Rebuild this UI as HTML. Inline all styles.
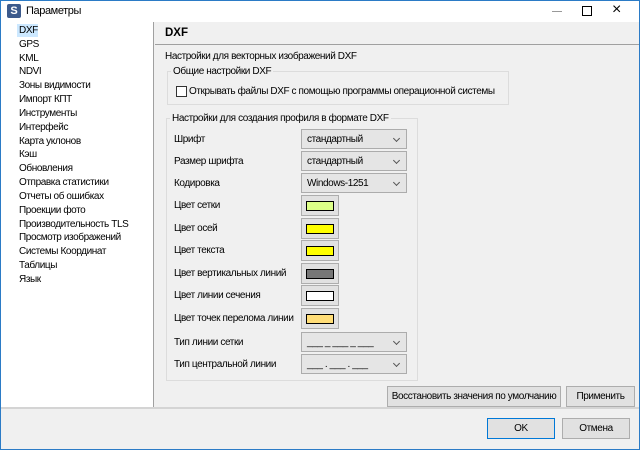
<!DOCTYPE html>
<html><head><meta charset="utf-8"><style>
*{box-sizing:border-box;margin:0;padding:0}
body{width:640px;height:450px;overflow:hidden;background:#f0f0f0;font-family:"Liberation Sans",sans-serif;font-size:10px;letter-spacing:-0.4px;color:#000;position:relative}
.a{position:absolute;white-space:nowrap}
.win{position:absolute;left:0;top:0;width:640px;height:450px;border:1px solid #2b7bc6;}
.combo{position:absolute;left:301px;width:106px;height:20px;background:#e5e5e5;border:1px solid #acacac;padding:4px 0 0 5px}
.combo:after{content:"";position:absolute;right:7px;top:6px;width:4px;height:4px;border-right:1px solid #555;border-bottom:1px solid #555;transform:rotate(45deg)}
.cb{position:absolute;left:301px;width:38px;height:21px;background:#e1e1e1;border:1px solid #adadad}
.cb i{position:absolute;left:4px;top:5px;width:28px;height:10px;border:1px solid #000}
.btn{position:absolute;height:21px;background:#e1e1e1;border:1px solid #adadad;text-align:center;padding-top:4px;white-space:nowrap}
.lbl{position:absolute;left:174px}
</style></head><body>
<div class="a" style="left:0;top:0;width:640px;height:22px;background:#fff"></div>
<div class="a" style="left:7px;top:4px;width:14px;height:14px;background:#3c5a8c;color:#fff;font-weight:bold;font-size:11px;text-align:center;line-height:14px;border-radius:2px;letter-spacing:0">S</div>
<div class="a" style="left:26px;top:5px;font-size:11px">Параметры</div>
<div class="a" style="left:552px;top:11px;width:10px;height:1px;background:#999"></div>
<div class="a" style="left:582px;top:6px;width:10px;height:10px;border:1px solid #000"></div>
<div class="a" style="left:612px;top:1px;font-size:16px;font-weight:300">×</div>

<div class="a" style="left:1px;top:22px;width:153px;height:386px;background:#fff;border-right:1px solid #a0a0a0"></div>
<div class="a" style="left:17px;top:24px;width:21px;height:13px;background:#cce8ff"></div>
<div class="a" style="left:19px;top:24px;line-height:13.83px">DXF<br>GPS<br>KML<br>NDVI<br>Зоны видимости<br>Импорт КПТ<br>Инструменты<br>Интерфейс<br>Карта уклонов<br>Кэш<br>Обновления<br>Отправка статистики<br>Отчеты об ошибках<br>Проекции фото<br>Производительность TLS<br>Просмотр изображений<br>Системы Координат<br>Таблицы<br>Язык</div>

<div class="a" style="left:155px;top:44px;width:484px;height:1px;background:#a0a0a0"></div>
<div class="a" style="left:165px;top:27px;font-weight:bold;font-size:11.5px;letter-spacing:0">DXF</div>
<div class="a" style="left:165px;top:51px">Настройки для векторных изображений DXF</div>

<div class="a" style="left:167px;top:71px;width:342px;height:34px;border:1px solid #dcdcdc"></div>
<div class="a" style="left:171px;top:66px;background:#f0f0f0;padding:0 2px">Общие настройки DXF</div>
<div class="a" style="left:176px;top:86px;width:11px;height:11px;border:1px solid #333;background:#fff"></div>
<div class="a" style="left:189px;top:86px">Открывать файлы DXF с помощью программы операционной системы</div>

<div class="a" style="left:166px;top:118px;width:252px;height:263px;border:1px solid #dcdcdc"></div>
<div class="a" style="left:170px;top:113px;background:#f0f0f0;padding:0 2px">Настройки для создания профиля в формате DXF</div>

<div class="lbl a" style="top:134px">Шрифт</div><div class="combo" style="top:129px">стандартный</div>
<div class="lbl a" style="top:156px">Размер шрифта</div><div class="combo" style="top:151px">стандартный</div>
<div class="lbl a" style="top:178px">Кодировка</div><div class="combo" style="top:173px">Windows-1251</div>
<div class="lbl a" style="top:200px">Цвет сетки</div><div class="cb" style="top:195px"><i style="background:#ddff88"></i></div>
<div class="lbl a" style="top:223px">Цвет осей</div><div class="cb" style="top:218px"><i style="background:#ffff00"></i></div>
<div class="lbl a" style="top:245px">Цвет текста</div><div class="cb" style="top:240px"><i style="background:#ffff00"></i></div>
<div class="lbl a" style="top:268px">Цвет вертикальных линий</div><div class="cb" style="top:263px"><i style="background:#777"></i></div>
<div class="lbl a" style="top:290px">Цвет линии сечения</div><div class="cb" style="top:285px"><i style="background:#fff"></i></div>
<div class="lbl a" style="top:313px">Цвет точек перелома линии</div><div class="cb" style="top:308px"><i style="background:#ffdd77"></i></div>
<div class="lbl a" style="top:337px">Тип линии сетки</div><div class="combo" style="top:332px">___ _ ___ _ ___</div>
<div class="lbl a" style="top:359px">Тип центральной линии</div><div class="combo" style="top:354px">___ . ___ . ___</div>

<div class="btn" style="left:387px;top:386px;width:174px">Восстановить значения по умолчанию</div>
<div class="btn" style="left:566px;top:386px;width:69px">Применить</div>

<div class="a" style="left:1px;top:407px;width:638px;height:2px;background:#d4d4d4"></div>
<div class="btn" style="left:487px;top:418px;width:68px;border:1px solid #0078d7">OK</div>
<div class="btn" style="left:562px;top:418px;width:68px">Отмена</div>
<div class="win"></div>
</body></html>
